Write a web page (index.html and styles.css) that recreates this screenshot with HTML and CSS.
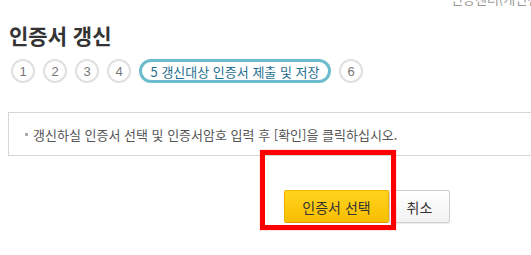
FILE: index.html
```html
<!DOCTYPE html>
<html lang="ko">
<head>
<meta charset="utf-8">
<title>인증서 갱신</title>
<link rel="stylesheet" href="styles.css">
</head>
<body>
<div class="page">
  <div class="util">인증센터(개인센터)</div>
  <h1 class="title">인증서 갱신</h1>
  <ol class="steps">
    <li class="step">1</li>
    <li class="step">2</li>
    <li class="step">3</li>
    <li class="step">4</li>
    <li class="step step-on">5 갱신대상 인증서 제출 및 저장</li>
    <li class="step">6</li>
  </ol>
  <div class="notice">
    <p class="notice-text"><span class="bullet"></span>갱신하실 인증서 선택 및 인증서암호 입력 후 [확인]을 클릭하십시오.</p>
  </div>
  <div class="actions">
    <button class="btn btn-primary" type="button">인증서 선택</button>
    <button class="btn btn-cancel" type="button">취소</button>
    <span class="highlight"></span>
  </div>
</div>
</body>
</html>
```

FILE: styles.css
```css
html {
  overflow: hidden;
}
html, body {
  margin: 0;
  padding: 0;
  background: #fff;
}
body {
  font-family: "Noto Sans CJK KR", "Noto Sans", sans-serif;
  color: #333;
}
.page {
  width: 700px;
  padding-left: 8px;
  padding-bottom: 40px;
  position: relative;
}
.util {
  margin-top: -9px;
  padding-left: 443px;
  font-size: 13px;
  line-height: 16px;
  color: #999;
  white-space: nowrap;
}
.title {
  margin: 15px 0 0 1px;
  font-size: 21px;
  line-height: 26px;
  font-weight: bold;
  color: #333;
}
.steps {
  list-style: none;
  margin: 11px 0 0 3px;
  padding: 0;
  display: flex;
  gap: 8px;
}
.step {
  box-sizing: border-box;
  width: 24px;
  height: 24px;
  border: 2px solid #e0e0e0;
  border-radius: 12px;
  display: flex;
  align-items: center;
  justify-content: center;
  font-size: 13px;
  color: #777;
  font-family: "Liberation Sans", "Noto Sans CJK KR", sans-serif;
}
.step-on {
  width: 192px;
  border: 3px solid #6dbccd;
  color: #1f6f8f;
  font-size: 13px;
  font-family: "Noto Sans CJK KR", sans-serif;
}
.notice {
  margin-top: 29px;
  box-sizing: border-box;
  height: 44px;
  border: 1px solid #d6d6d6;
  display: flex;
  align-items: center;
  padding-left: 16px;
}
.notice-text {
  margin: 0;
  font-size: 13px;
  color: #555;
  display: flex;
  align-items: center;
  white-space: nowrap;
}
.bullet {
  width: 3px;
  height: 3px;
  background: #aaa;
  margin-right: 5px;
}
.actions {
  position: relative;
  margin-top: 34px;
  padding-left: 276px;
  display: flex;
  gap: 0;
}
.btn {
  box-sizing: border-box;
  height: 33px;
  font-family: "Noto Sans CJK KR", sans-serif;
  font-size: 14px;
  color: #333;
  padding: 0;
  cursor: pointer;
}
.btn-primary {
  width: 105px;
  border: 1px solid #f0b400;
  border-bottom-color: #e09a00;
  border-radius: 2px;
  background: linear-gradient(#ffd41e, #f8be00);
}
.btn-cancel {
  width: 61px;
  border: 1px solid #cfcfcf;
  border-radius: 2px;
  background: linear-gradient(#ffffff, #f2f2f2);
  box-shadow: 0 1px 1px rgba(0,0,0,0.08);
}
.highlight {
  position: absolute;
  left: 252px;
  top: -40px;
  width: 136px;
  height: 80px;
  box-sizing: border-box;
  border: 5px solid #ff0000;
  box-shadow: 0 0 1px rgba(255,0,0,0.6);
  pointer-events: none;
}
```
